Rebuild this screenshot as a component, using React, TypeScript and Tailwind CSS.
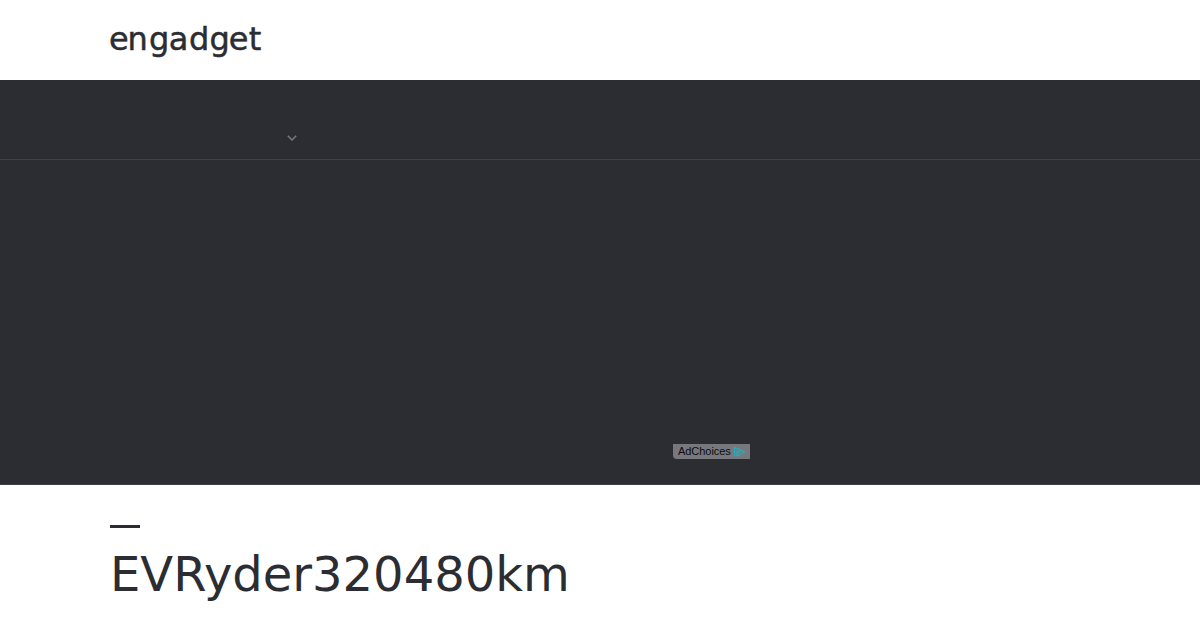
function Logo() {
  return (
    <svg className="block h-10 w-[160px]" viewBox="0 0 160 40" role="img" aria-label="engadget">
      <text
        x="-1 17.5 39 58.8 79 99.5 118.8 138.8"
        y="29.5"
        className="fill-[#2b2d32] stroke-[#2b2d32] stroke-[0.5] font-['DejaVu_Sans'] text-[32px]"
      >
        engadget
      </text>
    </svg>
  )
}

function AdChoices() {
  return (
    <div className="flex h-[15px] w-[77px] items-center rounded-bl bg-[#77787b] pl-[5px] font-['Liberation_Sans',sans-serif] text-[11px] leading-[15px] text-[#0b0c0f]">
      <span className="w-[53px] tracking-[-0.05px]">AdChoices</span>
      <svg className="ml-[2px] h-3 w-[13px] shrink-0" viewBox="0 0 13 12" fill="none">
        <path d="M1.5 10.500V1.500L11.500 6l-7.500 4V5" stroke="#2fa9b8" strokeWidth="1.4" strokeLinejoin="round" />
        <path d="M4.500 4.500v3L8 6z" fill="#2fa9b8" />
      </svg>
    </div>
  )
}

export default function App() {
  return (
    <div className="h-[630px] overflow-hidden bg-white text-[#2b2d32]">
      <header className="h-20 bg-white pt-5 pl-[110px]">
        <Logo />
      </header>
      <div className="h-[405px] border-b border-[#3d3d46] bg-[#2b2d32]">
        <nav className="h-20 border-b border-[#404247] pt-[55px] pl-[287px]">
          <svg className="block h-[6px] w-[10px]" viewBox="0 0 10 6" fill="none">
            <path d="M.8.8 5 5 9.200.8" stroke="#77797d" strokeWidth="1.5" />
          </svg>
        </nav>
        <div className="pt-[284px] pl-[673px]">
          <AdChoices />
        </div>
      </div>
      <main className="pt-10 pl-[110px]">
        <div className="h-[3px] w-[30px] bg-[#2b2d32]" />
        <h1 className="mt-[18px] font-['DejaVu_Sans',sans-serif] text-5xl leading-[56px]">EVRyder320480km</h1>
      </main>
    </div>
  )
}
